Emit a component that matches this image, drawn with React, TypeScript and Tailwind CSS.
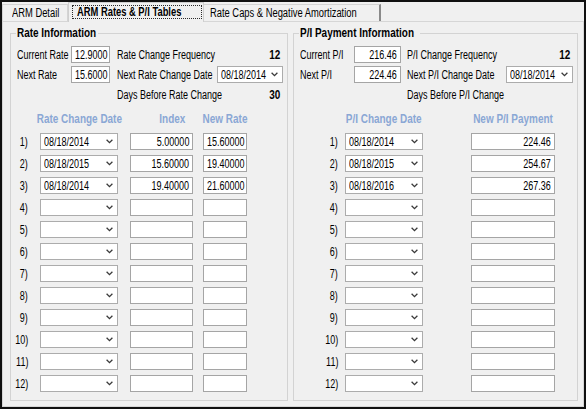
import React from "react";

type O = "l" | "r" | "c";
type S = "n" | "t" | "b";

function T({ children, o = "l", s = "n", className = "" }: { children?: React.ReactNode; o?: O; s?: S; className?: string }) {
  const origin = o === "l" ? "origin-left" : o === "r" ? "origin-right" : "origin-center";
  const scale = s === "n" ? "scale-x-[0.75]" : s === "t" ? "scale-x-[0.78]" : "scale-x-[0.83]";
  return <span className={`inline-block whitespace-nowrap ${scale} ${origin} ${className}`}>{children}</span>;
}

const Chevron = () => (
  <svg width="7" height="5" viewBox="0 0 7 5" className="shrink-0">
    <path d="M0.6 0.8 L3.5 3.7 L6.4 0.8" fill="none" stroke="#3a3a3a" strokeWidth="1.3" />
  </svg>
);

function Sel({ value, className = "" }: { value?: string; className?: string }) {
  return (
    <div className={`h-[17px] bg-white border border-[#acacac] flex items-center pl-[3px] pr-[4px] ${className}`}>
      <span className="flex-1 min-w-0 flex">{value ? <T>{value}</T> : null}</span>
      <Chevron />
    </div>
  );
}

function Txt({ value, right, className = "" }: { value?: string; right?: boolean; className?: string }) {
  return (
    <div
      className={`h-[17px] bg-white border border-[#a5a5a5] flex items-center px-[3px] ${
        right ? "justify-end" : "justify-start"
      } ${className}`}
    >
      {value ? <T o={right ? "r" : "l"}>{value}</T> : null}
    </div>
  );
}

const leftRows = [
  { d: "08/18/2014", i: "5.00000", n: "15.60000" },
  { d: "08/18/2015", i: "15.60000", n: "19.40000" },
  { d: "08/18/2014", i: "19.40000", n: "21.60000" },
];
const rightRows = [
  { d: "08/18/2014", p: "224.46" },
  { d: "08/18/2015", p: "254.67" },
  { d: "08/18/2016", p: "267.36" },
];
const nums = Array.from({ length: 12 }, (_, k) => k + 1);

export default function App() {
  return (
    <div className="w-[586px] h-[409px] bg-[#101010] p-[2px] text-[12px] leading-[14px] text-black font-['Liberation_Sans',Arial,sans-serif]">
      <div className="h-full bg-[#f0f0f0] flex flex-col">
        {/* tab strip */}
        <div className="h-[19px] flex items-end shrink-0">
          <div className="h-[17px] w-[66px] border border-b-0 border-[#d4d4d4] bg-[#f0f0f0] flex items-center pl-[9px]">
            <T s="t">ARM Detail</T>
          </div>
          <div className="relative z-10 h-[20px] w-[136px] -mb-px border border-b-0 border-[#cfcfcf] bg-[#f0f0f0] pl-[3px] pt-[2px]">
            <div className="w-[130px] h-[14px] border border-dotted border-[#2a2a2a] pl-[4px] flex items-center font-bold">
              <T s="t">ARM Rates &amp; P/I Tables</T>
            </div>
          </div>
          <div className="h-[17px] w-[177px] border border-b-0 border-l-0 border-[#d4d4d4] border-r-[#8a8a8a] border-r-2 bg-[#f0f0f0] flex items-center pl-[6px]">
            <T s="t">Rate Caps &amp; Negative Amortization</T>
          </div>
        </div>

        {/* panel */}
        <div className="flex-1 border border-[#d6d6d6] bg-[#f0f0f0] pt-[5px] pb-[5px] pl-[7px] pr-[5px] flex gap-[5px]">
          {/* left group */}
          <fieldset className="w-[278px] min-w-0 border border-[#d3d3d3] shrink-0">
            <legend className="ml-[5px] px-[1px] w-[82px] font-bold leading-[13px]">
              <T s="b">Rate Information</T>
            </legend>
            <div className="pt-[6px] flex flex-col">
              <div className="flex items-center h-[17px] pl-[6px] pr-[4px]">
                <span className="w-[54px] flex">
                  <T>Current Rate</T>
                </span>
                <Txt value="12.9000" className="w-[39px]" />
                <span className="ml-[7px] flex-1 min-w-0 flex">
                  <T>Rate Change Frequency</T>
                </span>
                <span className="font-bold pr-[3px] flex justify-end">
                  <T o="r" s="b">12</T>
                </span>
              </div>
              <div className="flex items-center h-[17px] pl-[6px] pr-[4px] mt-[3px]">
                <span className="w-[54px] flex">
                  <T>Next Rate</T>
                </span>
                <Txt value="15.6000" className="w-[39px]" />
                <span className="ml-[7px] flex-1 min-w-0 flex">
                  <T>Next Rate Change Date</T>
                </span>
                <Sel value="08/18/2014" className="w-[66px]" />
              </div>
              <div className="flex items-center h-[17px] pl-[106px] pr-[4px] mt-[3px]">
                <span className="flex-1 min-w-0 flex">
                  <T>Days Before Rate Change</T>
                </span>
                <span className="font-bold pr-[3px] flex justify-end">
                  <T o="r" s="b">30</T>
                </span>
              </div>
              <div className="flex items-center h-[14px] mt-[9px] pl-[4px] font-bold text-[#8aa7d5]">
                <span className="w-[13px] shrink-0" />
                <span className="ml-[12px] w-[78px] shrink-0 flex justify-center">
                  <T o="c" s="b">Rate Change Date</T>
                </span>
                <span className="ml-[12px] w-[63px] shrink-0 flex justify-end pr-[8px]">
                  <T o="r" s="b">Index</T>
                </span>
                <span className="ml-[10px] w-[44px] shrink-0 flex justify-center">
                  <T o="c" s="b">New Rate</T>
                </span>
              </div>
              <div className="mt-[7px] flex flex-col gap-[5px]">
                {nums.map((n) => {
                  const r = leftRows[n - 1];
                  return (
                    <div key={n} className="flex items-center h-[17px] pl-[4px]">
                      <span className="w-[13px] shrink-0 flex justify-end">
                        <T o="r">{n})</T>
                      </span>
                      <Sel value={r?.d} className="ml-[12px] w-[78px] shrink-0" />
                      <Txt value={r?.i} right className="ml-[12px] w-[63px] shrink-0" />
                      <Txt value={r?.n} className="ml-[10px] w-[44px] shrink-0" />
                    </div>
                  );
                })}
              </div>
            </div>
          </fieldset>

          {/* right group */}
          <fieldset className="flex-1 min-w-0 border border-[#d3d3d3]">
            <legend className="ml-[5px] px-[1px] w-[121px] font-bold leading-[13px]">
              <T s="b">P/I Payment Information</T>
            </legend>
            <div className="pt-[6px] flex flex-col">
              <div className="flex items-center h-[17px] pl-[6px] pr-[4px]">
                <span className="w-[54px] shrink-0 flex">
                  <T>Current P/I</T>
                </span>
                <Txt value="216.46" right className="w-[47px] shrink-0" />
                <span className="ml-[6px] flex-1 min-w-0 flex">
                  <T>P/I Change Frequency</T>
                </span>
                <span className="font-bold pr-[3px] flex justify-end">
                  <T o="r" s="b">12</T>
                </span>
              </div>
              <div className="flex items-center h-[17px] pl-[6px] pr-[4px] mt-[3px]">
                <span className="w-[54px] shrink-0 flex">
                  <T>Next P/I</T>
                </span>
                <Txt value="224.46" right className="w-[47px] shrink-0" />
                <span className="ml-[6px] flex-1 min-w-0 flex">
                  <T>Next P/I Change Date</T>
                </span>
                <Sel value="08/18/2014" className="w-[67px] shrink-0" />
              </div>
              <div className="flex items-center h-[17px] pl-[113px] pr-[4px] mt-[3px]">
                <span className="flex-1 min-w-0 flex">
                  <T>Days Before P/I Change</T>
                </span>
              </div>
              <div className="flex items-center h-[14px] mt-[9px] pl-[6px] font-bold text-[#8aa7d5]">
                <span className="w-[38px] shrink-0" />
                <span className="ml-[7px] w-[78px] shrink-0 flex justify-center">
                  <T o="c" s="b">P/I Change Date</T>
                </span>
                <span className="ml-[48px] w-[84px] shrink-0 flex justify-center">
                  <T o="c" s="b">New P/I Payment</T>
                </span>
              </div>
              <div className="mt-[7px] flex flex-col gap-[5px]">
                {nums.map((n) => {
                  const r = rightRows[n - 1];
                  return (
                    <div key={n} className="flex items-center h-[17px] pl-[6px]">
                      <span className="w-[38px] shrink-0 flex justify-end">
                        <T o="r">{n})</T>
                      </span>
                      <Sel value={r?.d} className="ml-[7px] w-[78px] shrink-0" />
                      <Txt value={r?.p} right className="ml-[48px] w-[84px] shrink-0" />
                    </div>
                  );
                })}
              </div>
            </div>
          </fieldset>
        </div>
      </div>
    </div>
  );
}
